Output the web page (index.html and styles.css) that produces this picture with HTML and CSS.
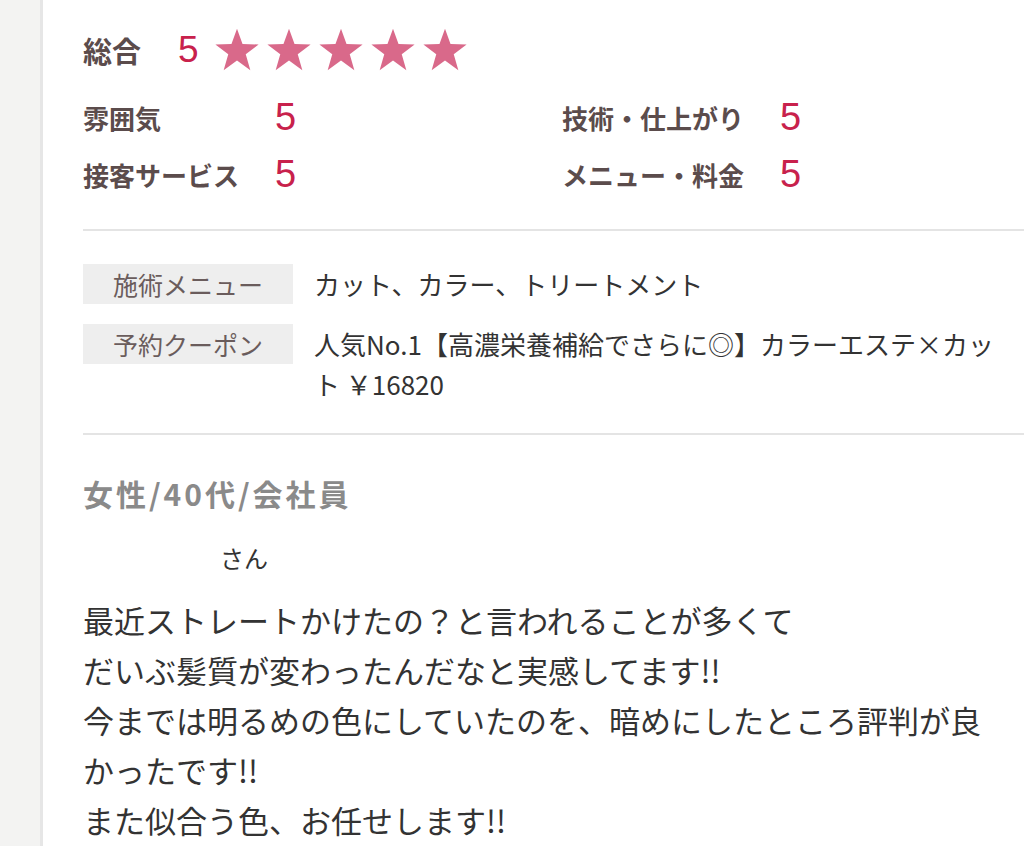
FILE: index.html
```html
<!DOCTYPE html>
<html lang="ja">
<head>
    <meta charset="UTF-8">
    <meta name="viewport" content="width=device-width, initial-scale=1.0">
    <title>口コミ</title>
    <link rel="stylesheet" href="styles.css">
</head>
<body>
    <div class="side"></div>

    <div class="review">
        <!-- 評価 -->
        <div class="total">
            <span class="total-label">総合</span>
            <span class="total-score">5</span>
            <span class="stars">
                <svg class="star" viewBox="0 0 100 100"><polygon points="50,4 62,37 97,38 69,59 79,94 50,73 21,94 31,59 3,38 38,37"/></svg>
                <svg class="star" viewBox="0 0 100 100"><polygon points="50,4 62,37 97,38 69,59 79,94 50,73 21,94 31,59 3,38 38,37"/></svg>
                <svg class="star" viewBox="0 0 100 100"><polygon points="50,4 62,37 97,38 69,59 79,94 50,73 21,94 31,59 3,38 38,37"/></svg>
                <svg class="star" viewBox="0 0 100 100"><polygon points="50,4 62,37 97,38 69,59 79,94 50,73 21,94 31,59 3,38 38,37"/></svg>
                <svg class="star" viewBox="0 0 100 100"><polygon points="50,4 62,37 97,38 69,59 79,94 50,73 21,94 31,59 3,38 38,37"/></svg>
            </span>
        </div>

        <div class="ratings">
            <div class="rating"><span class="rating-label">雰囲気</span><span class="rating-score">5</span></div>
            <div class="rating"><span class="rating-label">技術・仕上がり</span><span class="rating-score">5</span></div>
            <div class="rating"><span class="rating-label">接客サービス</span><span class="rating-score">5</span></div>
            <div class="rating"><span class="rating-label">メニュー・料金</span><span class="rating-score">5</span></div>
        </div>

        <hr class="divider">

        <!-- メニュー -->
        <div class="menu-info">
            <div class="info-row">
                <div class="info-label">施術メニュー</div>
                <div class="info-value">カット、カラー、トリートメント</div>
            </div>
            <div class="info-row">
                <div class="info-label">予約クーポン</div>
                <div class="info-value">人気No.1【高濃栄養補給でさらに◎】カラーエステ×カット ￥16820</div>
            </div>
        </div>

        <hr class="divider">

        <!-- 本文 -->
        <div class="profile">女性/40代/会社員</div>
        <div class="name"><span class="name-hidden"></span>さん</div>
        <p class="comment">最近ストレートかけたの？と言われることが多くて<br>だいぶ髪質が変わったんだなと実感してます!!<br>今までは明るめの色にしていたのを、暗めにしたところ評判が良かったです!!<br>また似合う色、お任せします!!</p>
    </div>
</body>
</html>
```

FILE: styles.css
```css
* {
    margin: 0;
    padding: 0;
    box-sizing: border-box;
}

body {
    font-family: "Noto Sans CJK JP", "Noto Sans", sans-serif;
    background-color: #ffffff;
    color: #333333;
    display: flex;
    min-height: 100vh;
    overflow: hidden;
}

.side {
    width: 43px;
    flex-shrink: 0;
    background-color: #f3f3f2;
    border-right: 3px solid #e6e6e6;
}

.review {
    flex: 1;
    padding-left: 40px;
}

.total {
    display: flex;
    align-items: center;
    height: 60px;
    margin-top: 20px;
}

.total-label {
    font-size: 29px;
    font-weight: bold;
    color: #5b4c4c;
    width: 95px;
}

.total-score {
    font-family: "Liberation Sans", sans-serif;
    font-size: 37px;
    color: #c8214c;
    width: 36px;
}

.stars {
    display: flex;
    gap: 6px;
}

.star {
    width: 46px;
    height: 46px;
    fill: #d9698a;
}

.ratings {
    display: grid;
    grid-template-columns: 479px 1fr;
    margin-top: 9px;
}

.rating {
    display: flex;
    align-items: center;
    height: 57px;
}

.rating-label {
    font-size: 26px;
    font-weight: bold;
    color: #5b4c4c;
    min-width: 156px;
    margin-right: 36px;
}

.rating-score {
    font-family: "Liberation Sans", sans-serif;
    font-size: 38px;
    color: #c8214c;
}

.divider {
    border: none;
    border-top: 2px solid #e4e4e4;
    margin-top: 26px;
}

.menu-info {
    padding: 33px 8px 29px 0;
    display: flex;
    flex-direction: column;
    gap: 20px;
}

.info-row {
    display: flex;
    align-items: flex-start;
}

.info-label {
    width: 210px;
    flex-shrink: 0;
    height: 40px;
    line-height: 40px;
    background-color: #eeeeee;
    color: #6a5c5c;
    font-size: 25px;
    text-align: center;
}

.info-value {
    margin-left: 21px;
    font-size: 26px;
    line-height: 40px;
    color: #333333;
}

.menu-info + .divider {
    margin-top: 0;
}

.profile {
    margin-top: 38px;
    font-size: 30px;
    letter-spacing: 3px;
    font-weight: bold;
    color: #8a8a8a;
    line-height: 40px;
}

.name {
    margin-top: 25px;
    font-size: 24px;
    line-height: 40px;
    color: #333333;
}

.name-hidden {
    display: inline-block;
    width: 137px;
}

.comment {
    margin-top: 17px;
    padding-right: 28px;
    font-size: 31px;
    line-height: 50px;
    color: #333333;
}
```
